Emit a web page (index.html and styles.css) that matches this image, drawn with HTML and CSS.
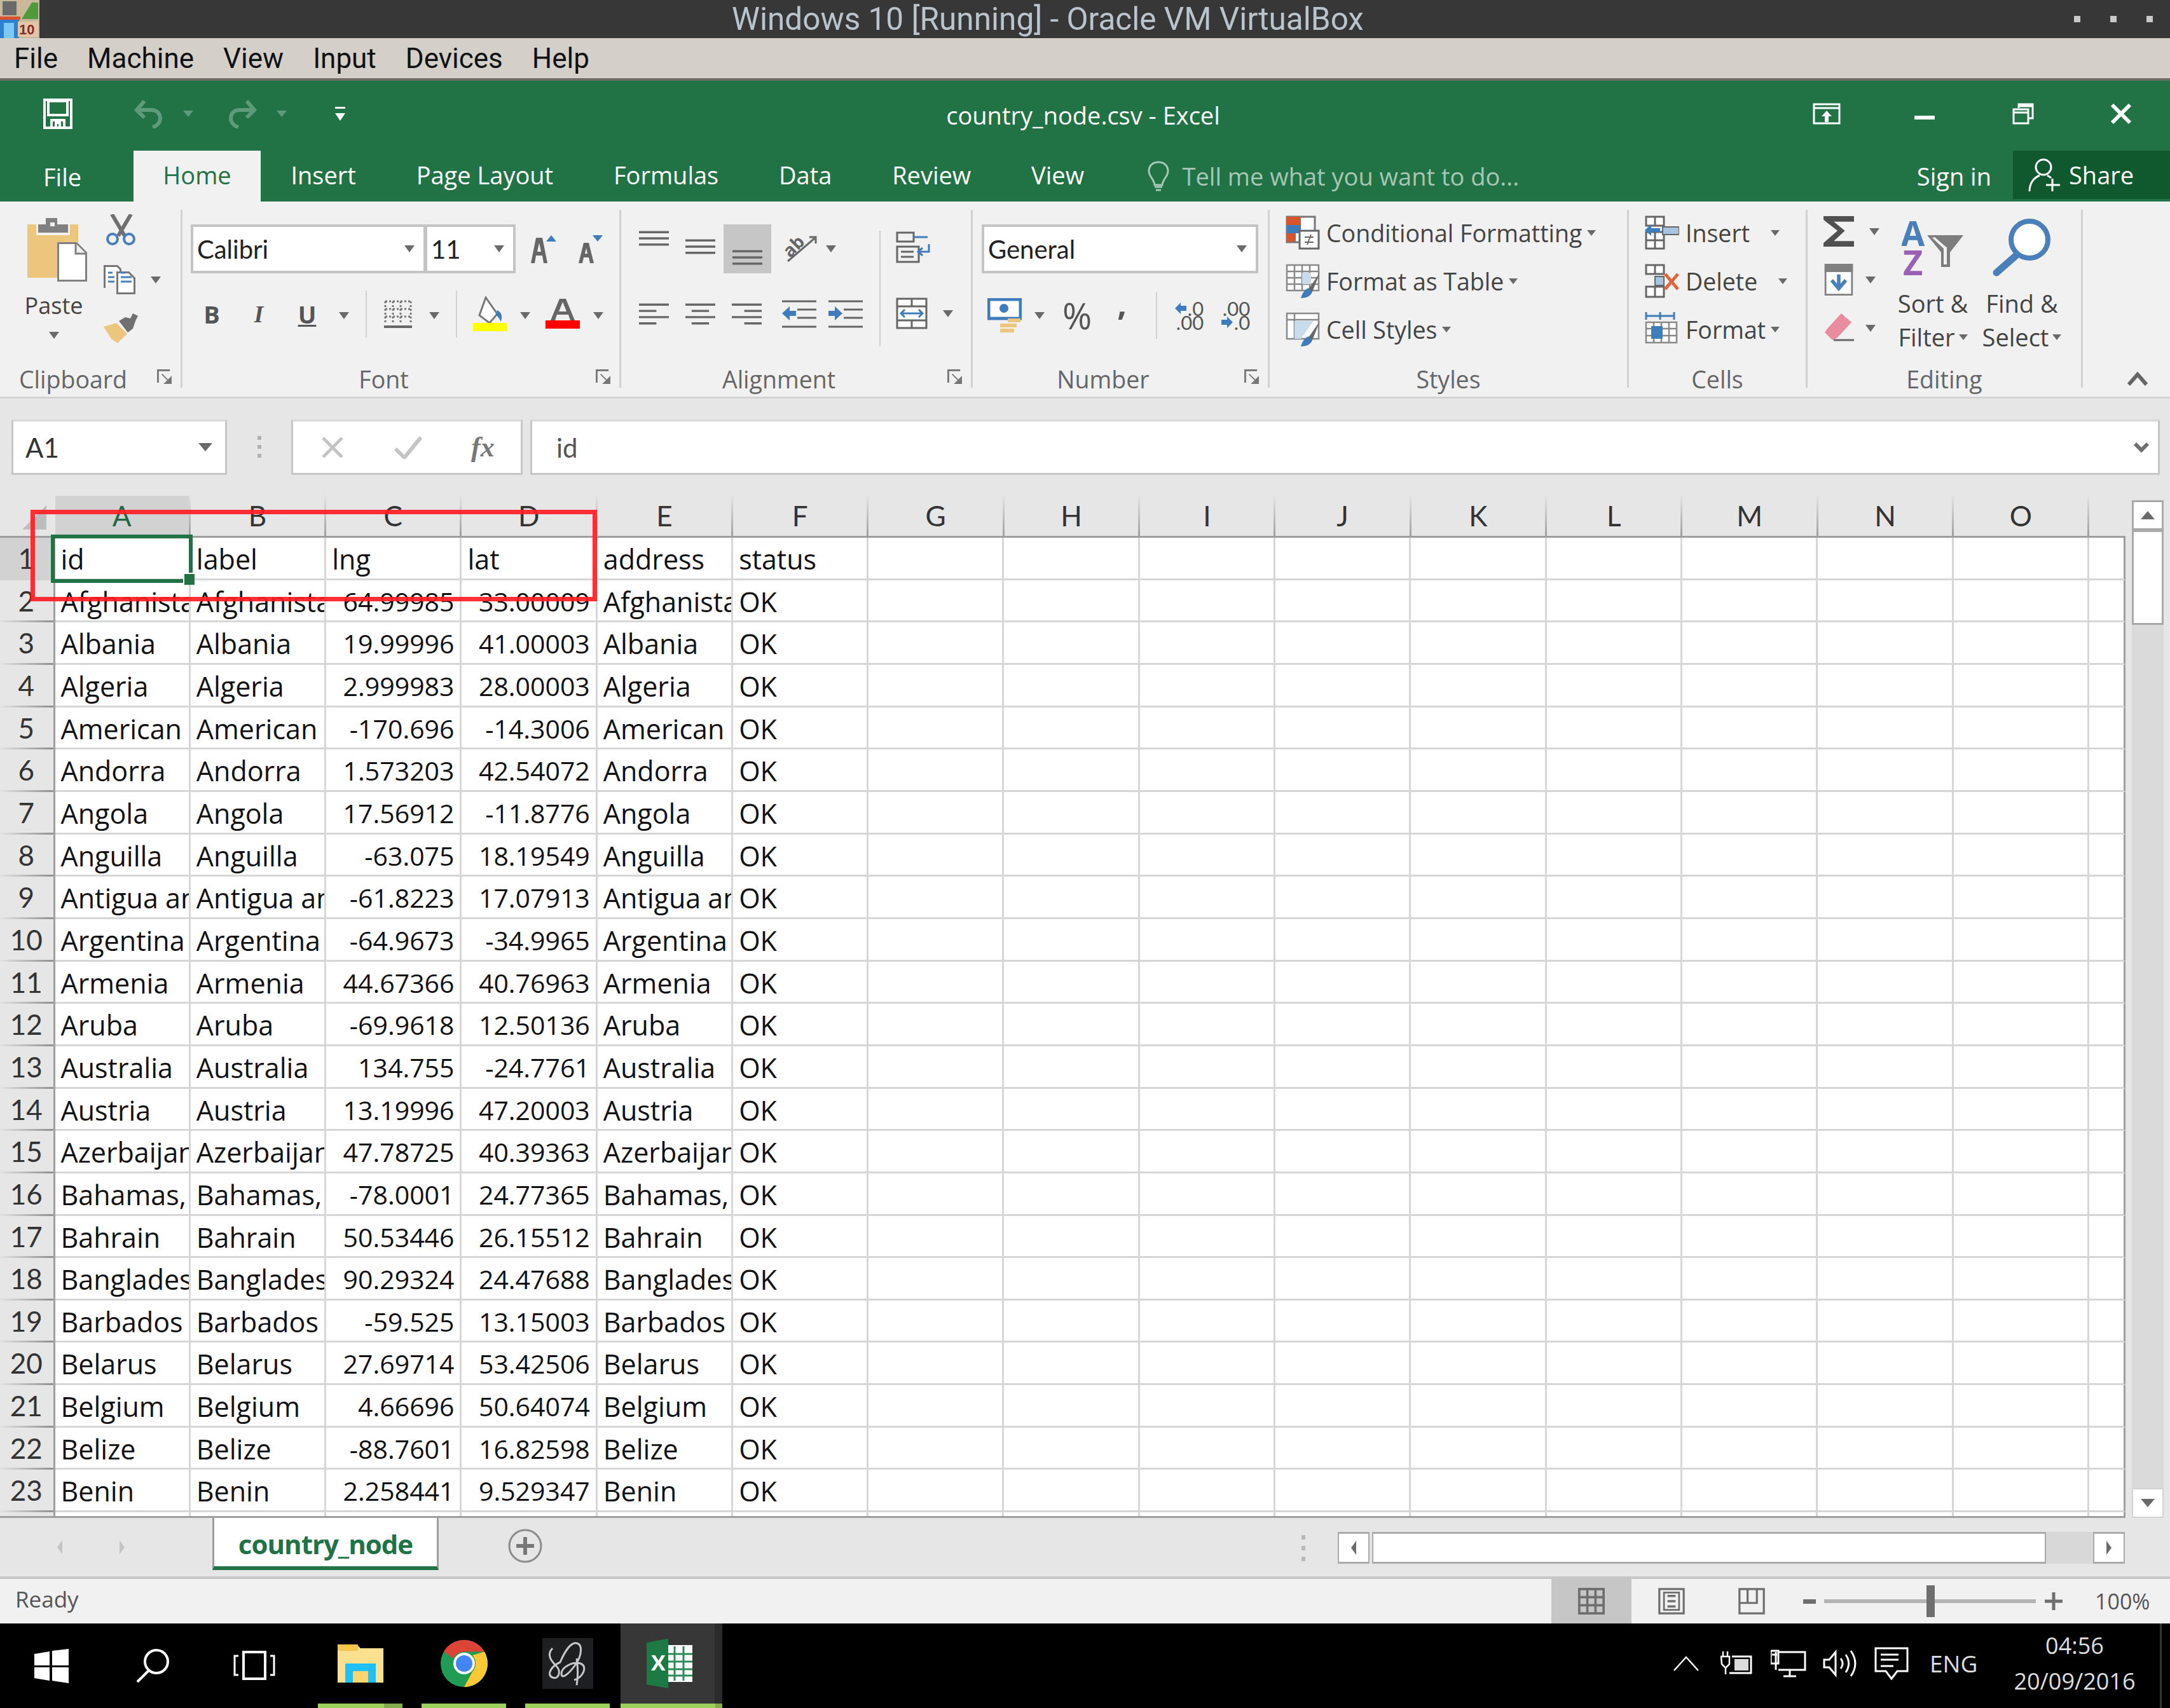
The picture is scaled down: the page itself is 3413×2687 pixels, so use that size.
FILE: index.html
```html
<!DOCTYPE html>
<html lang="en">
<head>
<meta charset="utf-8">
<title>Windows 10 [Running] - Oracle VM VirtualBox</title>
<link rel="stylesheet" href="styles.css">
</head>
<body>
<div class="vm-title">
  <svg class="vm-logo" viewBox="0 0 62 60"><rect width="62" height="60" fill="#c9b89a"/><rect x="0" y="28" width="30" height="32" fill="#2d7fd0"/><rect x="6" y="36" width="16" height="24" fill="#7cc8f5"/><path d="M34 30 L50 4 L60 4 L60 30 Z" fill="#4f9a3a"/><rect x="4" y="2" width="22" height="22" fill="#6a6a6a"/><rect x="0" y="26" width="32" height="5" fill="#d8502c"/><rect x="28" y="34" width="32" height="24" fill="#e3c7a4"/><text x="30" y="54" class="logo-t">10</text></svg>
  <span class="vm-name">Windows 10 [Running] - Oracle VM VirtualBox</span>
  <div class="vm-dots"><i></i><i></i><i></i></div>
</div>
<nav class="vm-menu"><span>File</span><span>Machine</span><span>View</span><span>Input</span><span>Devices</span><span>Help</span></nav>

<header class="title-row">
  <div class="qat">
    <svg class="ic save" viewBox="0 0 46 48"><path d="M2 2h42v44H2z M8 4v22h30V4z M13 46V34h20v12 M20 46v-8h6v8" fill="none" stroke="#fff" stroke-width="4"/></svg>
    <svg class="ic undo" viewBox="0 0 48 46"><path d="M17 3 5 17l12 12 M6 17h22c10 0 14 7 14 13s-4 12-12 14" fill="none" stroke="#5f9a7a" stroke-width="6"/></svg>
    <span class="qat-caret first"></span>
    <svg class="ic redo" viewBox="0 0 48 46"><path d="M31 3l12 14-12 12 M42 17H20C10 17 6 24 6 30s4 12 12 14" fill="none" stroke="#5f9a7a" stroke-width="6"/></svg>
    <span class="qat-caret"></span>
    <svg class="ic custom" viewBox="0 0 18 24"><path d="M1 1h16v3H1z M1 11h16L9 23z" fill="#fff"/></svg>
  </div>
  <div class="doc-title">country_node.csv - Excel</div>
  <div class="win-ctl">
    <svg class="ic w-opt" viewBox="0 0 44 34"><path d="M2 2h40v30H2z M2 8h40" fill="none" stroke="#fff" stroke-width="3"/><path d="M22 12l-8 9h5v9h6v-9h5z" fill="#fff"/></svg>
    <svg class="ic w-min" viewBox="0 0 32 34"><rect x="0" y="20" width="32" height="6" fill="#fff"/></svg>
    <svg class="ic w-max" viewBox="0 0 34 34"><path d="M10 8V2h22v22h-7 M2 10h23v22H2z M2 15h23 M10 5h22" fill="none" stroke="#fff" stroke-width="3"/></svg>
    <svg class="ic w-close" viewBox="0 0 34 34"><path d="M3 3l28 28M31 3 3 31" stroke="#fff" stroke-width="6"/></svg>
  </div>
</header>

<div class="tab-row">
  <span class="tab file">File</span>
  <span class="tab active">Home</span>
  <span class="tab">Insert</span>
  <span class="tab">Page Layout</span>
  <span class="tab">Formulas</span>
  <span class="tab">Data</span>
  <span class="tab">Review</span>
  <span class="tab">View</span>
  <div class="tell">
    <svg class="ic bulb" viewBox="0 0 36 48"><path d="M18 2C8 2 3 9 3 16c0 9 8 12 9 22h12c1-10 9-13 9-22C33 9 28 2 18 2z" fill="none" stroke="#a6c7b4" stroke-width="3"/><path d="M12 41h12M14 46h8" stroke="#a6c7b4" stroke-width="3"/></svg>
    <span>Tell me what you want to do...</span>
  </div>
  <span class="signin">Sign in</span>
  <div class="share">
    <svg class="ic share-ic" viewBox="0 0 52 54"><circle cx="24" cy="15" r="12" fill="none" stroke="#fff" stroke-width="3"/><path d="M2 53c0-14 8-22 16-25M30 28c2 1 4 2 6 4M38 33v20M28 43h22" fill="none" stroke="#fff" stroke-width="3"/></svg>
    <span>Share</span>
  </div>
</div>

<section class="ribbon">
  <div class="group g-clip">
    <div class="g-body clip-body">
      <div class="paste">
        <svg class="ic paste-ic" viewBox="0 0 94 100"><path d="M0 10h14v17h53V10h13v28H47v56H0z" fill="#edc67e"/><path d="M17 10h12V0h18v10h17v13H17z" fill="#808080"/><rect x="36" y="7" width="7" height="6" fill="#f1f1f1"/><path d="M48.500 39.500h29l15 15v44h-44z" fill="#fff" stroke="#808080" stroke-width="3"/><path d="M76 40v16h16" fill="#f1f1f1" stroke="#808080" stroke-width="3"/></svg>
        <span>Paste</span>
        <b class="caret"></b>
      </div>
      <div class="clip-tools">
        <svg class="ic cut" viewBox="0 0 50 50"><path d="M10 0l20 34M40 0 20 34" stroke="#707070" stroke-width="6"/><circle cx="11" cy="39" r="8" fill="none" stroke="#4a80ba" stroke-width="4"/><circle cx="37" cy="39" r="8" fill="none" stroke="#4a80ba" stroke-width="4"/></svg>
        <div class="copy-row"><svg class="ic copy" viewBox="0 0 50 46"><path d="M1.500 36V1.500h20l5 5v8" fill="#fff" stroke="#777" stroke-width="3"/><path d="M21.500 11.500h18l9 9v24h-27z" fill="#fff" stroke="#777" stroke-width="3"/><path d="M7 12h7M7 19h10M7 26h10M27 12h7M27 19h17M27 26h17" stroke="#4a80ba" stroke-width="3"/></svg><b class="caret"></b></div>
        <svg class="ic painter" viewBox="0 0 54 48"><path d="M0 21 20 15 37 32 22 47 12 40z" fill="#edc67e"/><path d="M24 12 34 6 42 8 46 0 54 4 50 12 46 24 38 30z" fill="#707070"/></svg>
      </div>
    </div>
    <div class="g-label has-l">Clipboard<svg class="launch" viewBox="0 0 24 24"><path d="M1.500 22V1.500H21" fill="none" stroke="#777" stroke-width="3"/><path d="M8 8l14 14M23 13v10H13z" fill="#777" stroke="#777" stroke-width="2"/></svg></div>
  </div>

  <div class="group g-font">
    <div class="g-body stack">
      <div class="line font-top">
        <div class="combo c-name"><span>Calibri</span><b class="caret"></b></div>
        <div class="combo c-size"><span>11</span><b class="caret"></b></div>
        <svg class="ic grow" viewBox="0 0 42 44"><path d="M10 4 2 44h6l2-12h10l2 12h6L20 4z M12 26l3-14 3 14z" fill="#666" fill-rule="evenodd"/><path d="M34 0l8 10H26z" fill="#3f7cbc"/></svg>
        <svg class="ic shrink" viewBox="0 0 40 44"><path d="M10 12 2 44h6l2-9h8l2 9h6L18 12z M12 29l2-9 2 9z" fill="#666" fill-rule="evenodd"/><path d="M24 0h16l-8 10z" fill="#3f7cbc"/></svg>
      </div>
      <div class="line font-bot">
        <span class="fmt bold">B</span>
        <span class="fmt ital">I</span>
        <span class="fmt under">U</span>
        <b class="caret"></b>
        <i class="vsep"></i>
        <svg class="ic border" viewBox="0 0 44 44"><path d="M2 2h40M2 14h40M2 26h40M2 2v36M14 2v36M26 2v36M42 2v36" stroke="#777" stroke-width="3" stroke-dasharray="3 3" fill="none"/><path d="M0 42h44" stroke="#666" stroke-width="4"/></svg>
        <b class="caret"></b>
        <i class="vsep"></i>
        <svg class="ic fill-c" viewBox="0 0 54 56"><path d="M20 2l18 26-12 14-16-12z" fill="#fff" stroke="#777" stroke-width="3"/><path d="M38 22c8 4 8 10 6 18-3-6-6-8-8-12z" fill="#3f7cbc"/><rect x="0" y="42" width="54" height="13" fill="#ff0"/></svg>
        <b class="caret"></b>
        <svg class="ic color-a" viewBox="0 0 54 48"><path d="M22 0 8 34h7l3-9h18l3 9h7L32 0z M21 20l6-15 6 15z" fill="#666" fill-rule="evenodd"/><rect x="0" y="34" width="54" height="13" fill="#f00"/></svg>
        <b class="caret"></b>
      </div>
    </div>
    <div class="g-label has-l">Font<svg class="launch" viewBox="0 0 24 24"><path d="M1.500 22V1.500H21" fill="none" stroke="#777" stroke-width="3"/><path d="M8 8l14 14M23 13v10H13z" fill="#777" stroke="#777" stroke-width="2"/></svg></div>
  </div>

  <div class="group g-align">
    <div class="g-body al-body">
      <div class="stack al-main">
        <div class="line al-top">
          <svg class="ic al a-t" viewBox="0 0 48 24"><path d="M0 2h48M0 12h48M0 22h48" stroke="#666" stroke-width="3.500"/></svg>
          <svg class="ic al a-m" viewBox="0 0 48 24"><path d="M0 2h48M0 12h48M0 22h48" stroke="#666" stroke-width="3.500"/></svg>
          <div class="a-on"><svg class="ic al" viewBox="0 0 48 24"><path d="M0 2h48M0 12h48M0 22h48" stroke="#666" stroke-width="3.500"/></svg></div>
          <svg class="ic orient" viewBox="0 0 56 46"><path d="M8 44 50 8M42 6h10v10" fill="none" stroke="#666" stroke-width="3"/><text x="2" y="32" class="ab" transform="rotate(-45 16 24)">ab</text></svg>
          <b class="caret"></b>
        </div>
        <div class="line al-bot">
          <svg class="ic al l3" viewBox="0 0 48 34"><path d="M0 2h48M0 12h28M0 22h48M0 32h28" stroke="#666" stroke-width="3.500"/></svg>
          <svg class="ic al l3" viewBox="0 0 48 34"><path d="M0 2h48M10 12h28M0 22h48M10 32h28" stroke="#666" stroke-width="3.500"/></svg>
          <svg class="ic al l3 mr" viewBox="0 0 48 34"><path d="M0 2h48M20 12h28M0 22h48M20 32h28" stroke="#666" stroke-width="3.500"/></svg>
          <svg class="ic indent" viewBox="0 0 54 44"><path d="M0 2h54M24 15h30M24 28h30M0 42h54" stroke="#666" stroke-width="3"/><path d="M0 21 12 10v7h10v8H12v7z" fill="#3f7cbc"/></svg>
          <svg class="ic indent" viewBox="0 0 54 44"><path d="M0 2h54M24 15h30M24 28h30M0 42h54" stroke="#666" stroke-width="3"/><path d="M22 21 10 10v7H0v8h10v7z" fill="#3f7cbc"/></svg>
        </div>
      </div>
      <i class="vsep tall"></i>
      <div class="stack al-side">
        <svg class="ic wrap" viewBox="0 0 56 50"><path d="M2 2h26v14H2z M2 24h34v24H2z M8 32h20M8 40h20" fill="none" stroke="#666" stroke-width="3"/><path d="M28 9h22" stroke="#3f7cbc" stroke-width="3"/><path d="M52 20v12H36M42 26l-7 6 7 6" fill="none" stroke="#3f7cbc" stroke-width="3"/></svg>
        <div class="merge-row"><svg class="ic merge" viewBox="0 0 50 50"><path d="M2 2h46v46H2z M2 14h46M2 36h46M25 2v12M25 36v12" fill="#fff" stroke="#666" stroke-width="3"/><path d="M8 25h34M14 19l-6 6 6 6M36 19l6 6-6 6" fill="none" stroke="#3f7cbc" stroke-width="3"/></svg><b class="caret"></b></div>
      </div>
    </div>
    <div class="g-label has-l">Alignment<svg class="launch" viewBox="0 0 24 24"><path d="M1.500 22V1.500H21" fill="none" stroke="#777" stroke-width="3"/><path d="M8 8l14 14M23 13v10H13z" fill="#777" stroke="#777" stroke-width="2"/></svg></div>
  </div>

  <div class="group g-num">
    <div class="g-body stack">
      <div class="combo c-gen"><span>General</span><b class="caret"></b></div>
      <div class="line num-bot">
        <svg class="ic money" viewBox="0 0 54 54"><rect x="2" y="2" width="50" height="30" fill="#fff" stroke="#3f7cbc" stroke-width="5"/><circle cx="26" cy="16" r="7" fill="#3f7cbc"/><path d="M32 32h20v6H32zM20 40h26v6H20zM20 48h22v6H20z" fill="#edc67e"/></svg>
        <b class="caret"></b>
        <span class="pct">%</span>
        <span class="comma">,</span>
        <i class="vsep"></i>
        <div class="dec"><span class="dec-t"><svg viewBox="0 0 18 18" class="arr"><path d="M0 9 9 0v5h9v8H9v5z" fill="#3f7cbc"/></svg>.0</span><span class="dec-b">.00</span></div>
        <div class="dec"><span class="dec-t">.00</span><span class="dec-b"><svg viewBox="0 0 18 18" class="arr"><path d="M18 9 9 0v5H0v8h9v5z" fill="#3f7cbc"/></svg>.0</span></div>
      </div>
    </div>
    <div class="g-label has-l">Number<svg class="launch" viewBox="0 0 24 24"><path d="M1.500 22V1.500H21" fill="none" stroke="#777" stroke-width="3"/><path d="M8 8l14 14M23 13v10H13z" fill="#777" stroke="#777" stroke-width="2"/></svg></div>
  </div>

  <div class="group g-styles">
    <div class="g-body list">
      <div class="li"><svg class="ic li-ic" viewBox="0 0 54 54"><path d="M2 2h44v40H2z" fill="#fff" stroke="#777" stroke-width="3"/><rect x="2" y="2" width="22" height="13" fill="#d9552c"/><rect x="2" y="15" width="22" height="13" fill="#3f7cbc"/><rect x="2" y="28" width="14" height="13" fill="#d9552c"/><path d="M22 24h30v28H22z" fill="#fff" stroke="#666" stroke-width="3"/><path d="M30 34h14M30 42h14M40 30l-6 16" stroke="#666" stroke-width="2"/></svg><span>Conditional Formatting</span><b class="caret sm"></b></div>
      <div class="li"><svg class="ic li-ic" viewBox="0 0 54 54"><path d="M2 2h50v40H2z M2 12h50M2 22h50M2 32h50M14 2v40M26 2v40M38 2v40" fill="#fff" stroke="#888" stroke-width="2.500"/><rect x="26" y="14" width="14" height="18" fill="#c9dcec"/><path d="M54 14 36 40l6 4z" fill="#666"/><path d="M36 38c-8 4-10 10-12 16 10 0 16-4 18-10z" fill="#3f7cbc"/></svg><span>Format as Table</span><b class="caret sm"></b></div>
      <div class="li"><svg class="ic li-ic" viewBox="0 0 54 54"><path d="M2 2h50v40H2z M2 12h50M14 2v40" fill="#fff" stroke="#888" stroke-width="2.500"/><path d="M14 14h30L24 42H14z" fill="#c9dcec"/><path d="M54 14 36 40l6 4z" fill="#666"/><path d="M36 38c-8 4-10 10-12 16 10 0 16-4 18-10z" fill="#3f7cbc"/></svg><span>Cell Styles</span><b class="caret sm"></b></div>
    </div>
    <div class="g-label">Styles</div>
  </div>

  <div class="group g-cells">
    <div class="g-body list">
      <div class="li"><svg class="ic li-ic" viewBox="0 0 54 54"><path d="M2 2h28v14H2zM16 2v14M2 26h28v26H2zM2 39h28M16 26v26" fill="#fff" stroke="#666" stroke-width="3"/><rect x="28" y="18" width="26" height="12" fill="#a9c4de" stroke="#666" stroke-width="2"/><path d="M0 23 10 14v6h14v6H10v6z" fill="#3f7cbc"/></svg><span>Insert</span><b class="caret sm far"></b></div>
      <div class="li"><svg class="ic li-ic" viewBox="0 0 54 54"><path d="M2 2h28v14H2zM16 2v14M2 36h28v16H2zM16 36v16" fill="#fff" stroke="#666" stroke-width="3"/><rect x="16" y="20" width="14" height="14" fill="#a9c4de" stroke="#666" stroke-width="2"/><path d="M32 16l20 24M52 16 32 40" stroke="#e0643a" stroke-width="5"/></svg><span>Delete</span><b class="caret sm far"></b></div>
      <div class="li"><svg class="ic li-ic" viewBox="0 0 54 54"><path d="M2 6h44M2 0v12M46 0v12M24 0v12" stroke="#3f7cbc" stroke-width="3" fill="none"/><path d="M2 16h48v32H2z M2 26h48M2 37h48M14 16v32M26 16v32M38 16v32" fill="#fff" stroke="#888" stroke-width="2.500"/><rect x="10" y="22" width="18" height="20" fill="#3f7cbc"/></svg><span>Format</span><b class="caret sm"></b></div>
    </div>
    <div class="g-label">Cells</div>
  </div>

  <div class="group g-edit">
    <div class="g-body edit-body">
      <div class="edit-tools">
        <div class="et first"><svg class="ic et-ic" viewBox="0 0 50 50"><path d="M0 0h50v9H17l18 15-18 17h33v9H0v-6l23-20L0 6z" fill="#505050"/></svg><b class="caret"></b></div>
        <div class="et"><svg class="ic et-ic" viewBox="0 0 48 54"><rect x="1.500" y="1.500" width="45" height="51" fill="#fff" stroke="#808080" stroke-width="3"/><rect x="0" y="0" width="48" height="14" fill="#808080"/><path d="M24 18v22M12 28l12 14 12-14" fill="none" stroke="#4a80ba" stroke-width="6"/></svg><b class="caret"></b></div>
        <div class="et"><svg class="ic et-ic" viewBox="0 0 48 46"><path d="M28 0 44 14 22 38 14 42 2 30 6 24z" fill="#e98ca0"/><path d="M16 42h32" stroke="#666" stroke-width="3"/></svg><b class="caret"></b></div>
      </div>
      <div class="big sort">
        <svg class="ic sort-ic" viewBox="0 0 98 88"><text x="-1" y="40" class="az a">A</text><text x="2" y="86" class="az z">Z</text><path d="M40 23h57L76 50v23H62V50z" fill="#7d7d7d"/><path d="M48 27 66 44v25h5V42l-2-1-17-15z" fill="#f1f1f1"/></svg>
        <span>Sort &amp;</span>
        <span>Filter<b class="caret sm"></b></span>
      </div>
      <div class="big find">
        <svg class="ic find-ic" viewBox="0 0 92 92"><circle cx="58" cy="34" r="29" fill="#fff" stroke="#4a80ba" stroke-width="8"/><path d="M38 58 6 86" stroke="#4a80ba" stroke-width="11" stroke-linecap="round"/></svg>
        <span>Find &amp;</span>
        <span>Select<b class="caret sm"></b></span>
      </div>
    </div>
    <div class="g-label">Editing</div>
  </div>

  <div class="collapse"><svg viewBox="0 0 32 26" class="chev"><path d="M2 22 16 6l14 16" fill="none" stroke="#666" stroke-width="6"/></svg></div>
</section>

<div class="fbar">
  <div class="namebox"><span>A1</span><b class="caret big-c"></b></div>
  <div class="grip"><i></i><i></i><i></i></div>
  <div class="fbtns">
    <svg class="ic fb-x" viewBox="0 0 36 36"><path d="M3 3l30 30M33 3 3 33" stroke="#c4c4c4" stroke-width="5"/></svg>
    <svg class="ic fb-c" viewBox="0 0 46 36"><path d="M3 20l14 14L43 2" fill="none" stroke="#c4c4c4" stroke-width="6"/></svg>
    <span class="fx">fx</span>
  </div>
  <div class="finput"><span>id</span><svg class="fchev" viewBox="0 0 24 17"><path d="M2 3l10 10L22 3" fill="none" stroke="#707070" stroke-width="6"/></svg></div>
</div>

<main class="work">
  <div class="sheet">
    <div class="row head">
      <div class="rh corner"><svg viewBox="0 0 38 38" class="corner-t"><path d="M38 0v38H0z" fill="#bdbdbd"/></svg></div>
      <div class="ch on">A</div><div class="ch">B</div><div class="ch">C</div><div class="ch">D</div><div class="ch">E</div><div class="ch">F</div><div class="ch">G</div><div class="ch">H</div><div class="ch">I</div><div class="ch">J</div><div class="ch">K</div><div class="ch">L</div><div class="ch">M</div><div class="ch">N</div><div class="ch">O</div><div class="ch rest"></div>
    </div>
    <div class="row"><div class="rh on">1</div><div class="c">id</div><div class="c">label</div><div class="c">lng</div><div class="c">lat</div><div class="c">address</div><div class="c">status</div><div class="blank"></div></div>
    <div class="row"><div class="rh">2</div><div class="c">Afghanistan</div><div class="c">Afghanistan</div><div class="c n">64.99985</div><div class="c n">33.00009</div><div class="c">Afghanistan</div><div class="c">OK</div><div class="blank"></div></div>
    <div class="row"><div class="rh">3</div><div class="c">Albania</div><div class="c">Albania</div><div class="c n">19.99996</div><div class="c n">41.00003</div><div class="c">Albania</div><div class="c">OK</div><div class="blank"></div></div>
    <div class="row"><div class="rh">4</div><div class="c">Algeria</div><div class="c">Algeria</div><div class="c n">2.999983</div><div class="c n">28.00003</div><div class="c">Algeria</div><div class="c">OK</div><div class="blank"></div></div>
    <div class="row"><div class="rh">5</div><div class="c">American</div><div class="c">American</div><div class="c n">-170.696</div><div class="c n">-14.3006</div><div class="c">American</div><div class="c">OK</div><div class="blank"></div></div>
    <div class="row"><div class="rh">6</div><div class="c">Andorra</div><div class="c">Andorra</div><div class="c n">1.573203</div><div class="c n">42.54072</div><div class="c">Andorra</div><div class="c">OK</div><div class="blank"></div></div>
    <div class="row"><div class="rh">7</div><div class="c">Angola</div><div class="c">Angola</div><div class="c n">17.56912</div><div class="c n">-11.8776</div><div class="c">Angola</div><div class="c">OK</div><div class="blank"></div></div>
    <div class="row"><div class="rh">8</div><div class="c">Anguilla</div><div class="c">Anguilla</div><div class="c n">-63.075</div><div class="c n">18.19549</div><div class="c">Anguilla</div><div class="c">OK</div><div class="blank"></div></div>
    <div class="row"><div class="rh">9</div><div class="c">Antigua and</div><div class="c">Antigua and</div><div class="c n">-61.8223</div><div class="c n">17.07913</div><div class="c">Antigua and</div><div class="c">OK</div><div class="blank"></div></div>
    <div class="row"><div class="rh">10</div><div class="c">Argentina</div><div class="c">Argentina</div><div class="c n">-64.9673</div><div class="c n">-34.9965</div><div class="c">Argentina</div><div class="c">OK</div><div class="blank"></div></div>
    <div class="row"><div class="rh">11</div><div class="c">Armenia</div><div class="c">Armenia</div><div class="c n">44.67366</div><div class="c n">40.76963</div><div class="c">Armenia</div><div class="c">OK</div><div class="blank"></div></div>
    <div class="row"><div class="rh">12</div><div class="c">Aruba</div><div class="c">Aruba</div><div class="c n">-69.9618</div><div class="c n">12.50136</div><div class="c">Aruba</div><div class="c">OK</div><div class="blank"></div></div>
    <div class="row"><div class="rh">13</div><div class="c">Australia</div><div class="c">Australia</div><div class="c n">134.755</div><div class="c n">-24.7761</div><div class="c">Australia</div><div class="c">OK</div><div class="blank"></div></div>
    <div class="row"><div class="rh">14</div><div class="c">Austria</div><div class="c">Austria</div><div class="c n">13.19996</div><div class="c n">47.20003</div><div class="c">Austria</div><div class="c">OK</div><div class="blank"></div></div>
    <div class="row"><div class="rh">15</div><div class="c">Azerbaijan</div><div class="c">Azerbaijan</div><div class="c n">47.78725</div><div class="c n">40.39363</div><div class="c">Azerbaijan</div><div class="c">OK</div><div class="blank"></div></div>
    <div class="row"><div class="rh">16</div><div class="c">Bahamas,</div><div class="c">Bahamas,</div><div class="c n">-78.0001</div><div class="c n">24.77365</div><div class="c">Bahamas,</div><div class="c">OK</div><div class="blank"></div></div>
    <div class="row"><div class="rh">17</div><div class="c">Bahrain</div><div class="c">Bahrain</div><div class="c n">50.53446</div><div class="c n">26.15512</div><div class="c">Bahrain</div><div class="c">OK</div><div class="blank"></div></div>
    <div class="row"><div class="rh">18</div><div class="c">Bangladesh</div><div class="c">Bangladesh</div><div class="c n">90.29324</div><div class="c n">24.47688</div><div class="c">Bangladesh</div><div class="c">OK</div><div class="blank"></div></div>
    <div class="row"><div class="rh">19</div><div class="c">Barbados</div><div class="c">Barbados</div><div class="c n">-59.525</div><div class="c n">13.15003</div><div class="c">Barbados</div><div class="c">OK</div><div class="blank"></div></div>
    <div class="row"><div class="rh">20</div><div class="c">Belarus</div><div class="c">Belarus</div><div class="c n">27.69714</div><div class="c n">53.42506</div><div class="c">Belarus</div><div class="c">OK</div><div class="blank"></div></div>
    <div class="row"><div class="rh">21</div><div class="c">Belgium</div><div class="c">Belgium</div><div class="c n">4.66696</div><div class="c n">50.64074</div><div class="c">Belgium</div><div class="c">OK</div><div class="blank"></div></div>
    <div class="row"><div class="rh">22</div><div class="c">Belize</div><div class="c">Belize</div><div class="c n">-88.7601</div><div class="c n">16.82598</div><div class="c">Belize</div><div class="c">OK</div><div class="blank"></div></div>
    <div class="row"><div class="rh">23</div><div class="c">Benin</div><div class="c">Benin</div><div class="c n">2.258441</div><div class="c n">9.529347</div><div class="c">Benin</div><div class="c">OK</div><div class="blank"></div></div>
    <div class="row"><div class="rh"></div><div class="c"></div><div class="c"></div><div class="c"></div><div class="c"></div><div class="c"></div><div class="c"></div><div class="blank"></div></div>
    <div class="sel"><i></i></div>
    <div class="red-box"></div>
  </div>
  <aside class="vscroll">
    <div class="vbtn"><b class="tri-up"></b></div>
    <div class="vthumb"></div>
    <div class="vtrack"></div>
    <div class="vbtn low"><b class="tri-down"></b></div>
  </aside>
</main>

<div class="sheetbar">
  <div class="nav"><b class="tri-l pale"></b><b class="tri-r pale"></b></div>
  <div class="sheet-tab">country_node</div>
  <svg class="add" viewBox="0 0 54 54"><circle cx="27" cy="27" r="25" fill="none" stroke="#8c8c8c" stroke-width="3"/><path d="M27 13v28M13 27h28" stroke="#777" stroke-width="6"/></svg>
  <div class="grip2"><i></i><i></i><i></i></div>
  <div class="hscroll">
    <div class="hbtn"><b class="tri-l"></b></div>
    <div class="hthumb"></div>
    <div class="htrack"></div>
    <div class="hbtn"><b class="tri-r"></b></div>
  </div>
</div>

<footer class="status">
  <span class="ready">Ready</span>
  <div class="view-btn on"><svg class="ic v1" viewBox="0 0 46 46"><path d="M2 2h42v42H2zM16 2v42M30 2v42M2 16h42M2 30h42" fill="none" stroke="#6e6e6e" stroke-width="4"/></svg></div>
  <div class="view-btn"><svg class="ic v1" viewBox="0 0 46 46"><path d="M2 2h42v42H2z" fill="none" stroke="#6e6e6e" stroke-width="3.500"/><path d="M10 8h26v30H10z" fill="none" stroke="#6e6e6e" stroke-width="3"/><path d="M16 14h14M16 23h14M16 32h14" stroke="#6e6e6e" stroke-width="4"/></svg></div>
  <div class="view-btn"><svg class="ic v1" viewBox="0 0 46 46"><path d="M2 2h42v42H2zM2 26h30V2M16 2v24" fill="none" stroke="#6e6e6e" stroke-width="3.500"/></svg></div>
  <div class="zoomer">
    <b class="z-minus"></b>
    <div class="z-track"><i></i></div>
    <svg class="z-plus" viewBox="0 0 28 28"><path d="M14 0v28M0 14h28" stroke="#6e6e6e" stroke-width="5"/></svg>
  </div>
  <span class="pct100">100%</span>
</footer>

<div class="taskbar">
  <svg class="tb win" viewBox="0 0 54 54"><path d="M0 8 24 4v22H0zM28 3 54 0v26H28zM0 29h24v21L0 46zM28 29h26v25l-26-4z" fill="#fff"/></svg>
  <svg class="tb search" viewBox="0 0 54 54"><circle cx="33" cy="21" r="18" fill="none" stroke="#fff" stroke-width="4"/><path d="M21 35 3 53" stroke="#fff" stroke-width="4"/></svg>
  <svg class="tb tview" viewBox="0 0 66 46"><path d="M16 2h34v42H16z" fill="none" stroke="#fff" stroke-width="4"/><path d="M8 8H2v30h6M58 8h6v30h-6" fill="none" stroke="#fff" stroke-width="3"/></svg>
  <div class="app a-folder"><svg class="tb-ic folder" viewBox="0 0 72 60"><path d="M0 0h30l6 6h36v54H0z" fill="#fbe08f"/><rect x="0" y="0" width="32" height="10" fill="#f4c64e"/><path d="M12 60V30h48v30H48V42H24v18z" fill="#1fc0f8"/><rect x="24" y="42" width="24" height="18" fill="#fbd56e"/></svg></div>
  <div class="app"><svg class="tb-ic chrome" viewBox="0 0 74 74"><circle cx="37" cy="37" r="37" fill="#1f9d55"/><path d="M37 0a37 37 0 0 1 32 18.500H37A19 19 0 0 0 20 29L5 18A37 37 0 0 1 37 0z" fill="#db4437"/><path d="M69 18.500A37 37 0 0 1 37 74L50 50A19 19 0 0 0 50 24z" fill="#fcc934"/><circle cx="37" cy="37" r="17" fill="#fff"/><circle cx="37" cy="37" r="13" fill="#4285f4"/></svg></div>
  <div class="app"><svg class="tb-ic sig" viewBox="0 0 80 80"><rect width="80" height="80" fill="#1d1f20"/><path d="M16 16C6 26 14 36 22 44s4 22-6 18-2-18 12-24C34 24 44 6 54 8s8 20-2 34-22 24-22 14 18-20 30-16 4 22-10 26M54 32c2 14 2 30 0 42" fill="none" stroke="#c8c8c8" stroke-width="3"/></svg></div>
  <div class="app active"><svg class="tb-ic xl" viewBox="0 0 74 78"><path d="M30 10h42v58H30z" fill="#fff"/><path d="M44 12v54M58 12v54M32 24h40M32 36h40M32 48h40M32 58h40" stroke="#2e8a5a" stroke-width="3"/><path d="M0 6 34 0v78L0 72z" fill="#1d7a45"/><text x="7" y="50" class="xl-t">X</text></svg></div>
  <div class="tray">
    <svg class="tr caret-up" viewBox="0 0 40 24"><path d="M1 23 20 2l19 21" fill="none" stroke="#fff" stroke-width="2.500"/></svg>
    <svg class="tr power" viewBox="0 0 54 38"><path d="M4 0v8M11 0v8M1 8h13v12l-6 6-6-6zM8 26v10" fill="none" stroke="#fff" stroke-width="2.500"/><path d="M18 8h30v26H14" fill="none" stroke="#fff" stroke-width="3"/><rect x="22" y="12" width="22" height="18" fill="#ddd"/></svg>
    <svg class="tr net" viewBox="0 0 56 44"><path d="M12 4h42v28H12M30 32v10M20 42h20M8 32V4M0 2h12v20H0zM2 8h8" fill="none" stroke="#fff" stroke-width="3"/></svg>
    <svg class="tr vol" viewBox="0 0 56 44"><path d="M2 16h8l10-12v36L10 28H2zM28 14c4 5 4 11 0 16M36 8c6 9 6 19 0 28M44 2c9 13 9 27 0 40" fill="none" stroke="#fff" stroke-width="3"/></svg>
    <svg class="tr note" viewBox="0 0 54 52"><path d="M2 2h50v36H36l-9 12-9-12H2zM10 12h28M10 20h28M10 30h20" fill="none" stroke="#fff" stroke-width="3"/></svg>
    <span class="eng">ENG</span>
    <div class="clock"><span>04:56</span><span>20/09/2016</span></div>
    <i class="show-desk"></i>
  </div>
</div>
</body>
</html>
```

FILE: styles.css
```css
* { box-sizing: border-box; }
html, body { margin: 0; padding: 0; }
body { width: 3413px; height: 2687px; overflow: hidden; font-family: "Open Sans", "Liberation Sans", sans-serif; background: #000; }
svg { display: block; flex: none; }
i, b { display: block; font-style: normal; }

.vm-title { height: 60px; background: #373737; display: flex; align-items: center; color: #b9c4cc; }
.vm-logo { width: 62px; height: 60px; }
.logo-t { font: 700 22px "Liberation Sans", sans-serif; fill: #8a2a2a; }
.vm-name { flex: 1; text-align: center; font-size: 49.500px; line-height: 60px; font-family: Roboto, sans-serif; padding-right: 28px; }
.vm-dots { display: flex; gap: 47px; padding-right: 27px; }
.vm-dots i { width: 10px; height: 10px; background: #c8c8c8; }

.vm-menu { height: 67px; background: #d4d0c9; border-bottom: 4px solid #6f6b66; display: flex; gap: 46px; padding: 0 22px; align-items: center; font-size: 44px; font-family: Roboto, sans-serif; color: #111; }

.title-row { height: 110px; background: #217346; display: grid; grid-template-columns: 1fr auto 1fr; align-items: center; color: #fff; padding-bottom: 6px; }
.qat { display: flex; align-items: center; padding-left: 68px; }
.save { width: 46px; height: 48px; margin-right: 96px; }
.undo, .redo { width: 48px; height: 46px; }
.qat-caret { width: 0; height: 0; border: 8px solid transparent; border-top: 10px solid #5f9a7a; border-bottom: 0; margin: 0 46px 0 30px; }
.qat-caret.first { margin-right: 53px; }
.custom { width: 18px; height: 24px; margin-left: 29px; }
.doc-title { font-size: 38px; position: relative; top: 2px; left: -3px; }
.win-ctl { display: flex; align-items: center; justify-content: flex-end; padding-right: 60px; height: 36px; }
.w-opt { width: 44px; height: 34px; margin-right: 116px; }
.w-min { width: 32px; height: 34px; margin-right: 122px; }
.w-max { width: 34px; height: 34px; margin-right: 120px; }
.w-close { width: 34px; height: 34px; }

.tab-row { height: 80px; background: #217346; display: flex; align-items: center; color: #fff; font-size: 38px; }
.tab { height: 80px; line-height: 76px; padding: 0 47.400px; white-space: nowrap; }
.tab.file { width: 210px; padding: 0 0 0 68px; line-height: 82px; }
.tab.active { width: 200px; padding: 0; text-align: center; background: #f1f1f1; color: #217346; }
.tell { display: flex; align-items: center; gap: 20px; color: #a6c7b4; margin-left: 51px; }
.bulb { width: 36px; height: 48px; }
.signin { margin-left: auto; padding-right: 34px; }
.share { width: 247px; height: 76px; align-self: flex-start; background: #10592f; display: flex; align-items: center; gap: 12px; padding-left: 24px; }
.share-ic { width: 52px; height: 54px; }

.ribbon { height: 310px; background: #f1f1f1; border-bottom: 3px solid #d4d4d4; display: flex; padding-top: 13px; color: #444; font-size: 37.500px; }
.group { height: 280px; border-right: 3px solid #d2d2d2; display: flex; flex-direction: column; flex: none; }
.g-body { height: 230px; flex: none; }
.g-label { height: 50px; line-height: 50px; padding-top: 12px; text-align: center; color: #666; font-size: 37.500px; position: relative; white-space: nowrap; }
.g-label.has-l { padding-right: 54px; }
.launch { position: absolute; right: 14px; bottom: 6px; width: 23px; height: 23px; }
.g-clip { width: 287px; }
.g-font { width: 690px; }
.g-align { width: 553px; }
.g-num { width: 467px; }
.g-styles { width: 565px; }
.g-cells { width: 281px; }
.g-edit { width: 433px; }
.caret { width: 0; height: 0; flex: none; border: 8px solid transparent; border-top: 11px solid #6a6a6a; border-bottom: 0; }
.caret.sm { border-width: 7px; border-top-width: 9px; border-bottom-width: 0; }

.clip-body { display: flex; }
.paste { width: 163px; display: flex; flex-direction: column; align-items: center; padding: 13px 0 0 6px; font-size: 36px; }
.paste-ic { width: 94px; height: 100px; margin-left: 11px; }
.paste span { margin-top: 13px; line-height: 50px; }
.paste .caret { margin-top: 16px; }
.clip-tools { padding-top: 7px; display: flex; flex-direction: column; }
.cut { width: 50px; height: 50px; margin-left: 3px; }
.copy-row { display: flex; align-items: center; gap: 24px; margin-top: 30px; }
.copy { width: 50px; height: 46px; }
.painter { width: 54px; height: 48px; margin-top: 30px; }

.stack { display: flex; flex-direction: column; }
.line { display: flex; align-items: center; }
.font-top { padding: 23px 0 0 13px; }
.combo { height: 77px; background: #fff; border: 4px solid #c4c4c4; display: flex; align-items: center; justify-content: space-between; color: #333; padding: 0 14px 0 6px; }
.combo span { font-family: Lato, sans-serif; font-size: 40px; color: #222; }
.c-name { width: 370px; }
.c-size { width: 143px; margin-left: -2px; }
.grow { width: 42px; height: 44px; margin-left: 22px; }
.shrink { width: 40px; height: 44px; margin-left: 33px; }
.font-bot { padding: 27px 0 0 33px; }
.fmt { width: 26px; font-size: 38px; line-height: 40px; color: #555; font-family: "Liberation Serif", serif; text-align: center; font-weight: bold; }
.fmt.bold { font-family: "Open Sans", sans-serif; }
.fmt.ital { font-style: italic; margin-left: 48px; }
.fmt.under { font-family: "Open Sans", sans-serif; margin-left: 47px; width: 32px; text-decoration: underline; }
.font-bot > .caret { margin: 4px 0 0 34px; }
.vsep { width: 2px; height: 74px; background: #d2d2d2; margin-left: 26px; flex: none; }
.border { width: 44px; height: 44px; margin-left: 27px; }
.font-bot > .border + .caret { margin-left: 27px; }
.fill-c { width: 54px; height: 56px; margin-left: 25px; }
.font-bot > .fill-c + .caret { margin-left: 20px; }
.color-a { width: 54px; height: 48px; margin-left: 24px; }
.font-bot > .color-a + .caret { margin-left: 21px; }

.al-body { display: flex; }
.al-main { width: 406px; padding: 23px 0 0 28px; }
.al { width: 47px; height: 24px; }
.al-top { height: 77px; align-items: flex-start; }
.a-t { margin-top: 10px; }
.a-m { margin-left: 26px; margin-top: 23px; }
.a-on { width: 75px; height: 77px; background: #c6c6c6; margin-left: 13px; display: flex; align-items: flex-end; justify-content: center; padding-bottom: 13px; }
.orient { width: 56px; height: 46px; margin: 14px 0 0 18px; }
.al-top > .caret { margin: 33px 0 0 12px; }
.ab { font: 700 28px "Open Sans", sans-serif; fill: #666; }
.al-bot { padding-top: 42px; }
.l3 { height: 34px; margin-right: 26px; }
.l3.mr { margin-right: 32px; }
.indent { width: 54px; height: 44px; margin-right: 19px; }
.vsep.tall { height: 182px; margin: 33px 0 0 0; }
.al-side { padding: 34px 0 0 24px; }
.wrap { width: 56px; height: 50px; }
.merge-row { display: flex; align-items: center; gap: 24px; margin-top: 54px; }
.merge { width: 50px; height: 50px; }

.g-num .g-body { padding: 23px 0 0 14px; }
.c-gen { width: 435px; }
.num-bot { padding: 29px 0 0 9px; }
.money { width: 54px; height: 54px; }
.num-bot > .caret { margin-left: 20px; }
.pct { font-size: 56px; margin-left: 28px; line-height: 50px; color: #555; }
.comma { font-size: 52px; line-height: 30px; margin-left: 40px; font-weight: 700; color: #555; position: relative; top: -20px; }
.dec { width: 50px; margin-right: 23px; font-family: Lato, sans-serif; font-size: 31px; line-height: 22px; display: flex; flex-direction: column; align-items: flex-end; color: #555; }
.dec span { display: flex; align-items: center; height: 22px; }
.arr { width: 18px; height: 18px; margin-right: 2px; }
.num-bot .vsep { margin: 0 23px 0 46px; }

.list { display: flex; flex-direction: column; gap: 22px; padding: 9px 0 0 25px; }
.li { display: flex; align-items: center; height: 54px; white-space: nowrap; font-size: 37.500px; }
.li-ic { width: 54px; height: 54px; margin-right: 10px; }
.li .caret { margin-left: 8px; }
.li .caret.far { margin-left: 33px; }

.edit-body { display: flex; }
.edit-tools { width: 124px; padding: 7px 0 0 25px; display: flex; flex-direction: column; gap: 22px; }
.et { display: flex; align-items: center; gap: 18px; height: 54px; }
.et.first { gap: 24px; }
.et-ic { width: 48px; height: 50px; }
.big { display: flex; flex-direction: column; align-items: center; font-size: 38px; line-height: 53px; }
.big span { display: flex; align-items: center; gap: 6px; white-space: nowrap; }
.sort { width: 146px; padding-top: 17px; }
.find { width: 134px; padding-top: 13px; }
.sort-ic { width: 98px; height: 88px; margin-bottom: 16px; }
.find-ic { width: 92px; height: 92px; margin-bottom: 16px; }
.az { font: 700 54px "Open Sans", sans-serif; }
.az.a { fill: #4a80ba; }
.az.z { fill: #9a60b4; }
.collapse { flex: 1; display: flex; align-items: flex-end; justify-content: center; padding: 0 0 11px 34px; height: 290px; }
.chev { width: 32px; height: 26px; }

.fbar { height: 153px; background: #e6e6e6; display: flex; padding: 33px 0 0 18px; align-items: flex-start; }
.namebox, .fbtns, .finput { height: 87px; background: #fff; border: 3px solid #c6c6c6; border-top-color: #d8d8d8; display: flex; align-items: center; }
.namebox { width: 339px; padding: 0 20px 0 19px; justify-content: space-between; font: 42px Lato, sans-serif; color: #333; }
.big-c { border-width: 11px; border-top-width: 13px; border-bottom-width: 0; }
.grip { width: 101px; display: flex; flex-direction: column; align-items: center; gap: 8px; padding-top: 26px; }
.grip i { width: 6px; height: 6px; background: #b0b0b0; }
.fbtns { width: 364px; padding-left: 44px; }
.fb-x { width: 36px; height: 36px; }
.fb-c { width: 46px; height: 36px; margin-left: 78px; }
.fx { font: italic 700 44px "Liberation Serif", serif; color: #777; margin-left: 76px; }
.finput { width: 2563px; margin-left: 12px; padding: 0 14px 0 38px; font: 42px Lato, sans-serif; color: #555; justify-content: space-between; }
.fchev { width: 24px; height: 17px; }

.work { height: 1608px; background: #e6e6e6; display: flex; align-items: stretch; }
.sheet { width: 3343px; height: 1608px; overflow: hidden; position: relative; border-bottom: 3px solid #9e9e9e; flex: none; }
.row { display: flex; height: 66.670px; background: #fff; }
.row.head { height: 66px; background: #e6e6e6; border-bottom: 3px solid #9e9e9e; }
.rh { width: 86.500px; flex: none; background: linear-gradient(90deg, #e2e2e2, #8f8f8f) bottom / 100% 3px no-repeat, #e6e6e6; border-right: 3px solid #9e9e9e; font: 44px/64px Lato, sans-serif; color: #333; text-align: center; padding-right: 1px; }
.rh.on { background: #d2d2d2; }
.rh.corner { background: #e6e6e6; border: 0; }
.corner-t { width: 38px; height: 38px; margin: 15px 0 0 35px; }
.ch { width: 213.330px; flex: none; font: 44px/60px Lato, sans-serif; text-align: center; color: #333; border-right: 3px solid; border-image: linear-gradient(#e4e4e4, #9e9e9e) 1; overflow: hidden; padding-top: 1px; }
.ch.on { background: #d2d2d2; color: #1f6a42; }
.ch.rest { flex: 1; width: auto; border: 0; }
.c { width: 213.330px; flex: none; overflow: hidden; white-space: nowrap; font: 43px/63px "Open Sans", sans-serif; color: #111; border-right: 3px solid #d6d6d6; border-bottom: 3px solid #d6d6d6; padding: 2px 0 0 9px; }
.c.n { text-align: right; font-size: 41px; padding: 2px 9px 0 0; }
.blank { flex: 1; border-bottom: 3px solid #d6d6d6; border-right: 3px solid #9e9e9e; background: repeating-linear-gradient(90deg, #fff 0, #fff 210.330px, #d6d6d6 210.330px, #d6d6d6 213.330px); }
.sel { position: absolute; left: 80px; top: 61px; width: 223px; height: 76px; border: 6px solid #217346; }
.sel i { position: absolute; right: -9px; bottom: -9px; width: 18px; height: 19px; background: #217346; border: 2px solid #fff; border-width: 2px 0 0 2px; }
.red-box { position: absolute; left: 48px; top: 22px; width: 891px; height: 144px; border: 7px solid rgba(255, 30, 36, .92); }

.vscroll { width: 50px; margin-left: 10px; flex: none; display: flex; flex-direction: column; padding-top: 7px; height: 1608px; }
.vbtn { height: 47px; background: #fff; border: 3px solid #a9a9a9; display: flex; align-items: center; justify-content: center; flex: none; }
.vbtn.low { border: 2px solid #d2d2d2; }
.vthumb { height: 149px; background: #fff; border: 3px solid #a9a9a9; margin-top: 0; flex: none; }
.vtrack { flex: 1; background: #dadada; }
.tri-up, .tri-down, .tri-l, .tri-r { width: 0; height: 0; border: 8px solid transparent; }
.tri-up { border-bottom: 13px solid #6a6a6a; border-top: 0; border-width: 0 11px 13px; }
.tri-down { border-top: 13px solid #6a6a6a; border-bottom: 0; border-width: 13px 11px 0; }
.tri-l { border-width: 11px 8px 11px 0; border-right-color: #6a6a6a; }
.tri-r { border-width: 11px 0 11px 8px; border-left-color: #6a6a6a; }
.tri-l.pale { border-right-color: #c4c4c4; }
.tri-r.pale { border-left-color: #c4c4c4; }

.sheetbar { height: 96px; background: #e6e6e6; border-bottom: 4px solid #c6c6c6; display: flex; align-items: flex-start; }
.nav { width: 334px; display: flex; gap: 90px; padding: 35px 0 0 90px; }
.sheet-tab { width: 356px; height: 85px; margin-top: -3px; padding-top: 8px; background: #fff; border: 3px solid #9e9e9e; border-top: 0; border-bottom: 6px solid #217346; text-align: center; color: #217346; font: 700 42px/72px "Open Sans", sans-serif; letter-spacing: -1px; }
.add { width: 54px; height: 54px; margin: 17px 0 0 109px; }
.grip2 { width: 7px; margin: 27px 0 0 1194px; display: flex; flex-direction: column; gap: 10px; }
.grip2 i { width: 6px; height: 7px; background: #b8b8b8; }
.hscroll { display: flex; width: 1238px; height: 50px; margin: 22px 0 0 50px; }
.hbtn { width: 50px; background: #fff; border: 3px solid #aaa; border-width: 3px 2px; display: flex; align-items: center; justify-content: center; flex: none; }
.hthumb { width: 1060px; margin-left: 4px; background: #fff; border: 3px solid #aaa; border-width: 3px 2px; flex: none; }
.htrack { flex: 1; background: #d8d8d8; }

.status { height: 70px; background: #f1f1f1; display: flex; align-items: stretch; }
.ready { width: 2440px; padding-left: 24px; font: 35px/64px "Open Sans", sans-serif; color: #555; }
.view-btn { width: 126px; display: flex; align-items: center; justify-content: center; }
.view-btn.on { background: #c6c6c6; }
.v1 { width: 42px; height: 44px; }
.zoomer { display: flex; align-items: center; width: 452px; padding-left: 18px; flex: none; }
.z-minus { width: 20px; height: 7px; background: #6e6e6e; margin-right: 13px; }
.z-track { width: 333px; height: 6px; background: #b4b4b4; position: relative; margin-right: 14px; flex: none; }
.z-track i { position: absolute; left: 161px; top: -22px; width: 13px; height: 50px; background: #6e6e6e; }
.z-plus { width: 28px; height: 28px; }
.pct100 { font: 34px/70px "Open Sans", sans-serif; color: #555; margin-left: 25px; white-space: nowrap; }

.taskbar { height: 133px; background: #000; display: flex; align-items: flex-start; position: relative; }
.tb { margin-top: 40px; }
.win { width: 54px; height: 54px; margin-left: 54px; }
.search { width: 54px; height: 54px; margin-left: 105px; margin-top: 39px; }
.tview { width: 66px; height: 46px; margin-left: 100px; margin-top: 43px; }
.app { width: 133px; height: 133px; margin-left: 30px; border-bottom: 7px solid #9bd05a; display: flex; align-items: center; justify-content: center; flex: none; }
.a-folder { margin-left: 67px; border-image: linear-gradient(90deg, #9bd05a 78%, #83ab50 78%) 1; }
.app.active { width: 160px; margin-left: 17px; background: linear-gradient(90deg, #373737 92.500%, #2b2b2b 92.500%); border-image: linear-gradient(90deg, #9bd05a 92.500%, #83ab50 92.500%) 1; padding-right: 4px; }
.folder { width: 72px; height: 60px; }
.chrome { width: 74px; height: 74px; }
.sig { width: 80px; height: 80px; }
.xl { width: 74px; height: 78px; }
.xl-t { font: 700 34px "Open Sans", sans-serif; fill: #fff; }
.tray { flex: 1; display: flex; align-items: center; justify-content: flex-end; height: 133px; color: #ddd; padding-bottom: 8px; }
.tr { flex: none; }
.caret-up { width: 40px; height: 24px; margin-right: 34px; }
.power { width: 54px; height: 38px; margin-right: 25px; }
.net { width: 56px; height: 44px; margin-right: 26px; }
.vol { width: 56px; height: 44px; margin-right: 25px; }
.note { width: 54px; height: 52px; margin-right: 33px; }
.eng { font-size: 37px; width: 78px; margin-right: 52px; }
.clock { width: 196px; display: flex; flex-direction: column; align-items: center; font-size: 36px; line-height: 56px; margin-right: 36px; }
.show-desk { width: 3px; height: 133px; background: #333; margin-right: 13px; align-self: flex-start; }
```
